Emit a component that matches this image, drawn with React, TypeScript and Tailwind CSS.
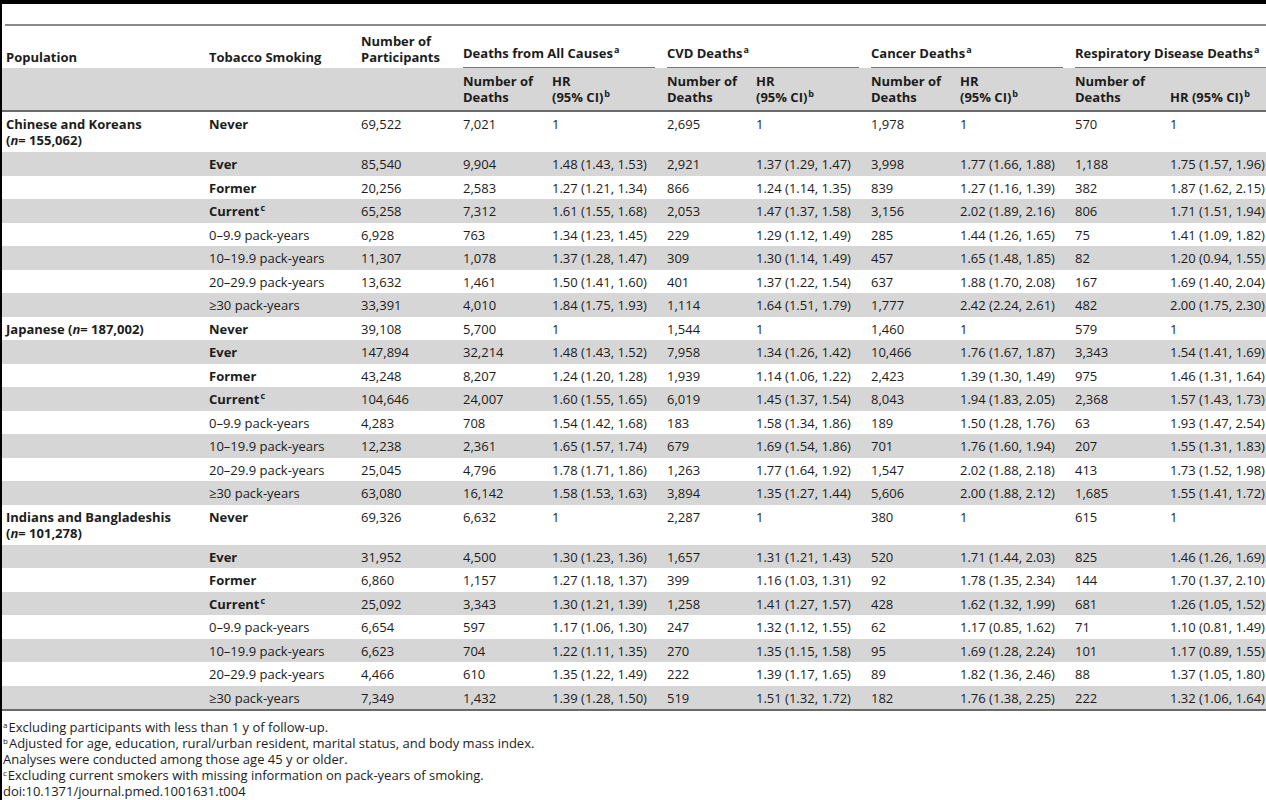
import React from "react";

type Row = {
  pop?: React.ReactNode;
  tall?: boolean;
  smoke: string;
  bold?: boolean;
  sup?: boolean;
  n: string;
  v: string[];
};

const cols = "grid grid-cols-[203px_152px_102px_89px_115px_89px_115px_89px_115px_95px_100px]";

const Sup = ({ c }: { c: string }) => <sup className="text-[9px] -top-[5px] ml-[1px]">{c}</sup>;
const NoteSup = ({ c }: { c: string }) => <sup className="text-[8px] -top-[4px] mr-[1px]">{c}</sup>;

const rows: Row[] = [
  { pop: <>Chinese and Koreans<br />(<i>n</i>= 155,062)</>, tall: true, smoke: "Never", bold: true, n: "69,522", v: ["7,021", "1", "2,695", "1", "1,978", "1", "570", "1"] },
  { smoke: "Ever", bold: true, n: "85,540", v: ["9,904", "1.48 (1.43, 1.53)", "2,921", "1.37 (1.29, 1.47)", "3,998", "1.77 (1.66, 1.88)", "1,188", "1.75 (1.57, 1.96)"] },
  { smoke: "Former", bold: true, n: "20,256", v: ["2,583", "1.27 (1.21, 1.34)", "866", "1.24 (1.14, 1.35)", "839", "1.27 (1.16, 1.39)", "382", "1.87 (1.62, 2.15)"] },
  { smoke: "Current", bold: true, sup: true, n: "65,258", v: ["7,312", "1.61 (1.55, 1.68)", "2,053", "1.47 (1.37, 1.58)", "3,156", "2.02 (1.89, 2.16)", "806", "1.71 (1.51, 1.94)"] },
  { smoke: "0–9.9 pack-years", n: "6,928", v: ["763", "1.34 (1.23, 1.45)", "229", "1.29 (1.12, 1.49)", "285", "1.44 (1.26, 1.65)", "75", "1.41 (1.09, 1.82)"] },
  { smoke: "10–19.9 pack-years", n: "11,307", v: ["1,078", "1.37 (1.28, 1.47)", "309", "1.30 (1.14, 1.49)", "457", "1.65 (1.48, 1.85)", "82", "1.20 (0.94, 1.55)"] },
  { smoke: "20–29.9 pack-years", n: "13,632", v: ["1,461", "1.50 (1.41, 1.60)", "401", "1.37 (1.22, 1.54)", "637", "1.88 (1.70, 2.08)", "167", "1.69 (1.40, 2.04)"] },
  { smoke: "≥30 pack-years", n: "33,391", v: ["4,010", "1.84 (1.75, 1.93)", "1,114", "1.64 (1.51, 1.79)", "1,777", "2.42 (2.24, 2.61)", "482", "2.00 (1.75, 2.30)"] },
  { pop: <>Japanese (<i>n</i>= 187,002)</>, smoke: "Never", bold: true, n: "39,108", v: ["5,700", "1", "1,544", "1", "1,460", "1", "579", "1"] },
  { smoke: "Ever", bold: true, n: "147,894", v: ["32,214", "1.48 (1.43, 1.52)", "7,958", "1.34 (1.26, 1.42)", "10,466", "1.76 (1.67, 1.87)", "3,343", "1.54 (1.41, 1.69)"] },
  { smoke: "Former", bold: true, n: "43,248", v: ["8,207", "1.24 (1.20, 1.28)", "1,939", "1.14 (1.06, 1.22)", "2,423", "1.39 (1.30, 1.49)", "975", "1.46 (1.31, 1.64)"] },
  { smoke: "Current", bold: true, sup: true, n: "104,646", v: ["24,007", "1.60 (1.55, 1.65)", "6,019", "1.45 (1.37, 1.54)", "8,043", "1.94 (1.83, 2.05)", "2,368", "1.57 (1.43, 1.73)"] },
  { smoke: "0–9.9 pack-years", n: "4,283", v: ["708", "1.54 (1.42, 1.68)", "183", "1.58 (1.34, 1.86)", "189", "1.50 (1.28, 1.76)", "63", "1.93 (1.47, 2.54)"] },
  { smoke: "10–19.9 pack-years", n: "12,238", v: ["2,361", "1.65 (1.57, 1.74)", "679", "1.69 (1.54, 1.86)", "701", "1.76 (1.60, 1.94)", "207", "1.55 (1.31, 1.83)"] },
  { smoke: "20–29.9 pack-years", n: "25,045", v: ["4,796", "1.78 (1.71, 1.86)", "1,263", "1.77 (1.64, 1.92)", "1,547", "2.02 (1.88, 2.18)", "413", "1.73 (1.52, 1.98)"] },
  { smoke: "≥30 pack-years", n: "63,080", v: ["16,142", "1.58 (1.53, 1.63)", "3,894", "1.35 (1.27, 1.44)", "5,606", "2.00 (1.88, 2.12)", "1,685", "1.55 (1.41, 1.72)"] },
  { pop: <>Indians and Bangladeshis<br />(<i>n</i>= 101,278)</>, tall: true, smoke: "Never", bold: true, n: "69,326", v: ["6,632", "1", "2,287", "1", "380", "1", "615", "1"] },
  { smoke: "Ever", bold: true, n: "31,952", v: ["4,500", "1.30 (1.23, 1.36)", "1,657", "1.31 (1.21, 1.43)", "520", "1.71 (1.44, 2.03)", "825", "1.46 (1.26, 1.69)"] },
  { smoke: "Former", bold: true, n: "6,860", v: ["1,157", "1.27 (1.18, 1.37)", "399", "1.16 (1.03, 1.31)", "92", "1.78 (1.35, 2.34)", "144", "1.70 (1.37, 2.10)"] },
  { smoke: "Current", bold: true, sup: true, n: "25,092", v: ["3,343", "1.30 (1.21, 1.39)", "1,258", "1.41 (1.27, 1.57)", "428", "1.62 (1.32, 1.99)", "681", "1.26 (1.05, 1.52)"] },
  { smoke: "0–9.9 pack-years", n: "6,654", v: ["597", "1.17 (1.06, 1.30)", "247", "1.32 (1.12, 1.55)", "62", "1.17 (0.85, 1.62)", "71", "1.10 (0.81, 1.49)"] },
  { smoke: "10–19.9 pack-years", n: "6,623", v: ["704", "1.22 (1.11, 1.35)", "270", "1.35 (1.15, 1.58)", "95", "1.69 (1.28, 2.24)", "101", "1.17 (0.89, 1.55)"] },
  { smoke: "20–29.9 pack-years", n: "4,466", v: ["610", "1.35 (1.22, 1.49)", "222", "1.39 (1.17, 1.65)", "89", "1.82 (1.36, 2.46)", "88", "1.37 (1.05, 1.80)"] },
  { smoke: "≥30 pack-years", n: "7,349", v: ["1,432", "1.39 (1.28, 1.50)", "519", "1.51 (1.32, 1.72)", "182", "1.76 (1.38, 2.25)", "222", "1.32 (1.06, 1.64)"] },
];

const groups = ["Deaths from All Causes", "CVD Deaths", "Cancer Deaths", "Respiratory Disease Deaths"];

export default function App() {
  return (
    <div
      className="h-[800px] overflow-hidden bg-white border-l-2 border-t-4 border-black text-[#1c1c1c] text-[13px] leading-[16px]"
      style={{ fontFamily: '"Open Sans", "Noto Sans", sans-serif' }}
    >
      <div className="pt-[20px]">
        <div className="ml-[3px] h-[2px] bg-[#8a8a8a]" />

        {/* header row 1 */}
        <div className={`${cols} font-bold h-[42px]`}>
          <div className="pl-[4px] flex items-end pb-[3px]">Population</div>
          <div className="pl-[4px] flex items-end pb-[3px]">Tobacco Smoking</div>
          <div className="pl-[4px] flex items-end pb-[3px]">Number of<br />Participants</div>
          {groups.map((g, i) => (
            <div key={g} className={`col-span-2 flex items-end ml-[4px] ${i === 3 ? "" : "mr-[8px]"} border-b border-[#777] pb-[6px]`}>
              <span>{g}<Sup c="a" /></span>
            </div>
          ))}
        </div>

        {/* header row 2 */}
        <div className={`${cols} font-bold h-[44px] bg-[#d6d6d6] border-b-2 border-[#6a6a6a]`}>
          <div />
          <div />
          <div />
          {groups.map((g, i) => (
            <React.Fragment key={g}>
              <div className="pl-[4px] pt-[5px]">Number of<br />Deaths</div>
              {i === 3 ? (
                <div className="pl-[4px] pt-[21px]">HR (95% CI)<Sup c="b" /></div>
              ) : (
                <div className="pl-[4px] pt-[5px]">HR<br />(95% CI)<Sup c="b" /></div>
              )}
            </React.Fragment>
          ))}
        </div>

        {/* body */}
        <div className="border-b-2 border-[#6a6a6a]">
          {rows.map((r, i) => (
            <div key={i} className={`${cols} ${i % 2 === 1 ? "bg-[#d6d6d6]" : "bg-white"} ${r.tall ? "h-[40px]" : "h-[23.5px]"} pt-[4px]`}>
              <div className="pl-[4px] font-bold">{r.pop}</div>
              <div className={`pl-[4px] ${r.bold ? "font-bold" : ""}`}>
                {r.smoke}
                {r.sup && <Sup c="c" />}
              </div>
              <div className="pl-[4px]">{r.n}</div>
              {r.v.map((x, j) => (
                <div key={j} className="pl-[4px] whitespace-nowrap">{x}</div>
              ))}
            </div>
          ))}
        </div>

        {/* footnotes */}
        <div className="pl-[1px] pt-[8px] leading-[16px]">
          <div><NoteSup c="a" />Excluding participants with less than 1 y of follow-up.</div>
          <div><NoteSup c="b" />Adjusted for age, education, rural/urban resident, marital status, and body mass index.</div>
          <div>Analyses were conducted among those age 45 y or older.</div>
          <div><NoteSup c="c" />Excluding current smokers with missing information on pack-years of smoking.</div>
          <div>doi:10.1371/journal.pmed.1001631.t004</div>
        </div>
      </div>
    </div>
  );
}
